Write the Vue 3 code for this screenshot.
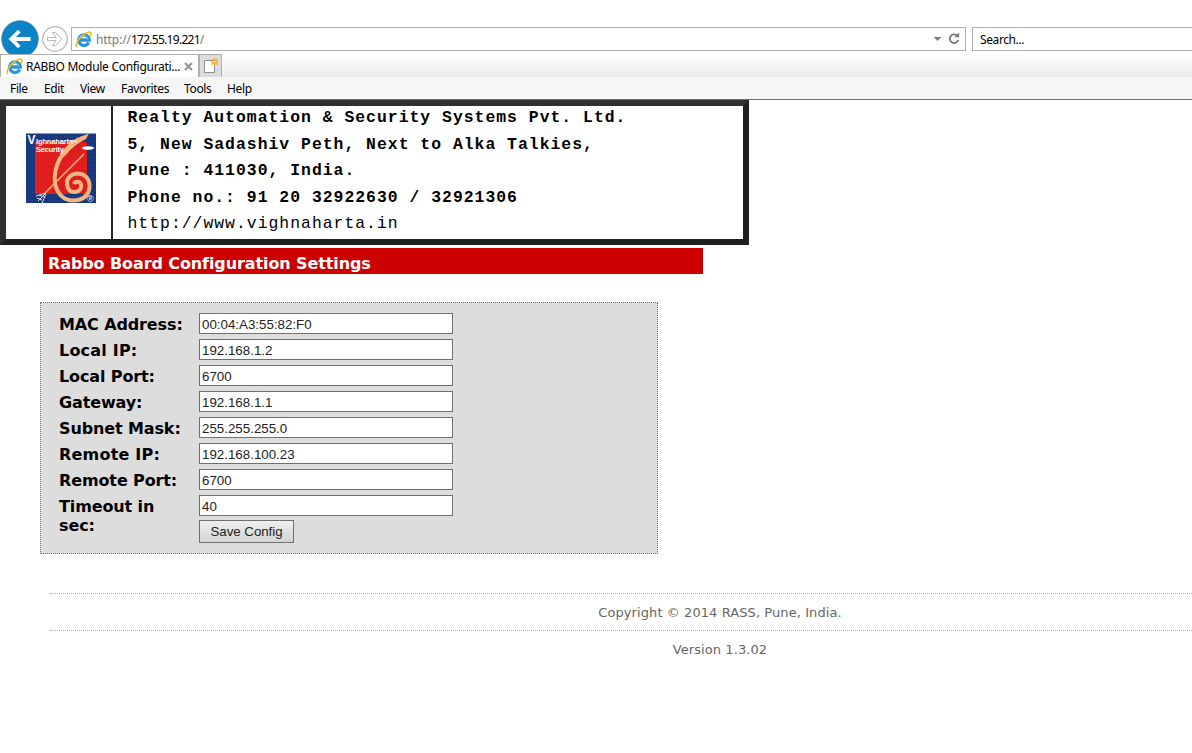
<script setup>
import { ref } from 'vue'

const menu = [
  { label: 'File', w: 34 },
  { label: 'Edit', w: 36 },
  { label: 'View', w: 41 },
  { label: 'Favorites', w: 63 },
  { label: 'Tools', w: 43 },
  { label: 'Help', w: 40 },
]
const fields = ref([
  { label: 'MAC Address:', value: '00:04:A3:55:82:F0' },
  { label: 'Local IP:', value: '192.168.1.2', wide: true },
  { label: 'Local Port:', value: '6700' },
  { label: 'Gateway:', value: '192.168.1.1' },
  { label: 'Subnet Mask:', value: '255.255.255.0' },
  { label: 'Remote IP:', value: '192.168.100.23', wide: true },
  { label: 'Remote Port:', value: '6700' },
  { label: 'Timeout in sec:', value: '40' },
])
</script>

<template>
  <div class="window">
    <header class="nav">
      <svg class="nav-buttons" width="71" height="38" viewBox="0 0 71 38">
        <circle cx="20" cy="19" r="18.3" fill="#0a84c6" stroke="#4a7f9c" stroke-width="0.8" />
        <path d="M30.500 19H12M19.300 11l-8 8 8 8" fill="none" stroke="#fff" stroke-width="3.8" />
        <circle cx="55" cy="19" r="12.3" fill="#fff" stroke="#b4b4b4" stroke-width="1.2" />
        <path d="M47.500 17.400h8.600l-3.800-4.900h3.200l6.300 6.500-6.300 6.500h-3.200l3.800-4.900h-8.600z" fill="#fff" stroke="#b4b4b4" stroke-width="1" />
      </svg>
      <div class="address">
        <svg class="ie" width="17" height="17" viewBox="0 0 17 17">
          <path d="M13.700 11.500A5.300 5.300 0 1 1 14.200 9H5" fill="none" stroke="#2b93d8" stroke-width="3.300" />
          <path d="M12.800 8.200A4.700 4.700 0 0 0 4.800 6.500" fill="none" stroke="#7fd0f5" stroke-width="1.200" />
          <path d="M2.1 15.900C-.3 14 2.6 8.700 7.200 4.800S16.100-.3 15.900 3.100c0 .8-.3 1.700-.8 2.500" fill="none" stroke="#f2bd1d" stroke-width="1.700" />
        </svg>
        <span class="url"><i>http://</i>172.55.19.221<i>/</i></span>
        <svg class="tools" width="32" height="16" viewBox="0 0 32 16">
          <path d="M3.500 6h8l-4 4z" fill="#808080" />
          <path d="M27.300 4.900A4.300 4.300 0 1 0 28.200 9" fill="none" stroke="#777" stroke-width="1.800" />
          <path d="M24.200 6.300h4.900V1.400z" fill="#777" />
        </svg>
      </div>
      <div class="search">Search...</div>
    </header>

    <div class="tabs">
      <div class="tab">
        <svg class="ie" width="17" height="17" viewBox="0 0 17 17">
          <path d="M13.700 11.500A5.300 5.300 0 1 1 14.200 9H5" fill="none" stroke="#2b93d8" stroke-width="3.300" />
          <path d="M12.800 8.200A4.700 4.700 0 0 0 4.800 6.500" fill="none" stroke="#7fd0f5" stroke-width="1.200" />
          <path d="M2.1 15.900C-.3 14 2.6 8.700 7.200 4.800S16.100-.3 15.900 3.100c0 .8-.3 1.700-.8 2.500" fill="none" stroke="#f2bd1d" stroke-width="1.700" />
        </svg>
        <span class="tab-title">RABBO Module Configurati...</span>
        <svg class="close" width="9" height="9" viewBox="0 0 9 9"><path d="M1 1l7 7M8 1L1 8" stroke="#929292" stroke-width="1.900" /></svg>
      </div>
      <div class="new-tab">
        <svg width="22" height="22" viewBox="0 0 22 22">
          <path d="M4.500 5.500h10v12h-10z" fill="#fff" stroke="#909090" />
          <path d="M14.500 3v8M10.500 7h8M11.800 4.300l5.400 5.400M17.200 4.300l-5.400 5.400" stroke="#e59a20" stroke-width="1.200" />
          <circle cx="14.500" cy="7" r="1.500" fill="#ffd36b" />
        </svg>
      </div>
    </div>

    <nav class="menu">
      <span v-for="m in menu" :key="m.label" :style="{ width: m.w + 'px' }">{{ m.label }}</span>
    </nav>

    <section class="banner">
      <div class="logo">
        <svg width="78" height="78" viewBox="0 0 78 78">
          <defs>
            <pattern id="dither" width="4" height="4" patternUnits="userSpaceOnUse">
              <rect x="0" y="0" width="1" height="1" fill="#82304f" opacity=".3" />
              <rect x="2" y="2" width="1" height="1" fill="#f05a36" opacity=".25" />
            </pattern>
            <pattern id="speck" width="6" height="6" patternUnits="userSpaceOnUse">
              <rect x="1" y="1" width="1" height="1" fill="#f5f1d4" />
              <rect x="4" y="4" width="1" height="1" fill="#e3f2ee" />
            </pattern>
          </defs>
          <rect width="78" height="78" fill="url(#speck)" />
          <rect x="4" y="3.500" width="70" height="69.500" fill="#063c8c" />
          <rect x="13" y="12" width="52" height="52" fill="#e8191a" />
          <rect x="4" y="3.500" width="70" height="69.500" fill="url(#dither)" />
          <path d="M62 24L23 63" stroke="#f2a770" stroke-width="1.700" />
          <path d="M57 9C40 20 31 36 33 53C35 65 43 70.500 51 70.500C61 70.500 67.500 65 67.500 56C67.500 48 62 43.500 56 43.500C49 43.500 44.500 48 45 54C45.500 60 49 62.500 53 62C58 61.500 60 58 59 54.500C58 51 53 51 52 54" fill="none" stroke="#f5b780" stroke-width="4" />
          <path d="M68 3.500C56 6 46 13 39 24L43 26C49 18 56 13 64 9L67 3.500Z" fill="#f5b780" />
          <path d="M24 63l-10 3M24 63l-8 8M24 64l-4 9M17 65l5 2M15 68l5 2" fill="none" stroke="#d7dfed" stroke-width="1" />
          <ellipse cx="66" cy="18" rx="6" ry="1.700" fill="#fff" />
          <path d="M55 12l-5-2" stroke="#fff" />
          <text x="5.500" y="13.500" class="logo-v">V</text>
          <text x="14" y="14" class="logo-text" textLength="37">Ighnaharta</text>
          <text x="14" y="22" class="logo-text" textLength="28">Security</text>
          <text x="65" y="72" class="logo-r">®</text>
        </svg>
      </div>
      <div class="company">
        <b>Realty Automation &amp; Security Systems Pvt. Ltd.</b>
        <b>5, New Sadashiv Peth, Next to Alka Talkies,</b>
        <b>Pune : 411030, India.</b>
        <b>Phone no.: 91 20 32922630 / 32921306</b>
        <span>http://www.vighnaharta.in</span>
      </div>
    </section>

    <h1>Rabbo Board Configuration Settings</h1>

    <form class="settings" @submit.prevent>
      <label v-for="f in fields" :key="f.label" class="row">
        <span :class="{ wide: f.wide }">{{ f.label }}</span>
        <input v-model="f.value" type="text" />
      </label>
      <button type="submit">Save Config</button>
    </form>

    <footer>
      <p>Copyright © 2014 RASS, Pune, India.</p>
      <p>Version 1.3.02</p>
    </footer>
  </div>
</template>

<style>
body { margin: 0; background: #fff; overflow: hidden; }
</style>

<style scoped>
* { box-sizing: border-box; }
.window { width: 1192px; height: 753px; padding-top: 20px; overflow: hidden; background: #fff; font-family: "Noto Sans", sans-serif; font-size: 12px; color: #000; }
.nav { display: flex; height: 34px; }
.nav-buttons { flex: none; }
.address, .search { height: 24px; margin-top: 7px; border: 1px solid #b0b0b0; background: #fff; display: flex; align-items: center; }
.address { width: 895px; padding: 0 3px; }
.ie { flex: none; }
.url { margin-left: 4px; padding-top: 1px; letter-spacing: -0.72px; white-space: nowrap; }
.url i { font-style: normal; color: #777; letter-spacing: -0.1px; }
.tools { margin-left: auto; }
.search { margin-left: 6px; width: 220px; border-right: 0; padding: 1px 0 0 7px; letter-spacing: -0.4px; }
.tabs { position: relative; display: flex; height: 23px; background: linear-gradient(#fff, #ebebeb); }
.tab { display: flex; align-items: center; width: 199px; height: 23px; padding-left: 5px; border: 1px solid #b0b0b0; border-bottom: 0; background: #fff; }
.tab-title { width: 156px; margin-left: 3px; letter-spacing: -0.29px; white-space: nowrap; }
.close { margin-left: 2px; }
.new-tab { width: 23px; height: 23px; border: 1px solid #b0b0b0; border-bottom: 0; background: #dcdcdc; }
.menu { display: flex; height: 23px; padding-left: 10px; border-bottom: 1px solid #6b6b6b; background: #f6f6f6; line-height: 24px; letter-spacing: -0.35px; }
.banner { display: flex; width: 749px; height: 145px; border: 6px solid; border-color: #303030 #202020 #202020 #303030; }
.logo { width: 107px; padding: 24px 0 0 16px; border-right: 2px solid #252525; }
.logo svg { display: block; }
.logo-v { font: bold 12px "Liberation Sans", sans-serif; fill: #fff; }
.logo-text { font: bold 7.500px "Liberation Sans", sans-serif; fill: #fff; }
.logo-r { font: 9px "Liberation Sans", sans-serif; fill: #fff; }
.company { display: flex; flex-direction: column; padding-left: 14.500px; margin-top: -1px; font: 16.4px/26.5px "Liberation Mono", monospace; letter-spacing: 1.010px; white-space: pre; }
h1 { width: 660px; height: 26px; margin: 3px 0 0 43px; padding-left: 5px; background: #c00; color: #fff; font: bold 16px/31px "DejaVu Sans", sans-serif; letter-spacing: -0.1px; }
.settings { width: 618px; height: 252px; margin: 28px 0 0 40px; padding: 10px 18px; border: 1px dotted #777; background: #ddd; }
.row { display: flex; height: 26px; }
.row:last-of-type { height: 25px; }
.row span { width: 140px; padding-right: 14px; font: bold 16px/19px "DejaVu Sans", sans-serif; letter-spacing: -0.12px; margin-top: 2px; }
.row .wide { letter-spacing: 0.2px; }
input { width: 254px; height: 21px; padding: 1px 2px 0; border: 1px solid #707070; border-radius: 0; outline: 0; background: #fff; color: #222; font: 13.333px "Liberation Sans", sans-serif; }
button { display: block; width: 95px; height: 23px; margin-left: 140px; padding: 0; border: 1px solid #707070; border-radius: 0; background: linear-gradient(#efefef, #d4d4d4); color: #222; font: 13.333px "Liberation Sans", sans-serif; letter-spacing: -0.05px; }
footer { width: 1340px; margin: 39px 0 0 50px; color: #666; font: 13px/36px "DejaVu Sans", sans-serif; letter-spacing: 0.08px; text-align: center; }
footer p { height: 37px; margin: 0; padding-top: 1px; border-top: 1px dotted #aaa; }
</style>
